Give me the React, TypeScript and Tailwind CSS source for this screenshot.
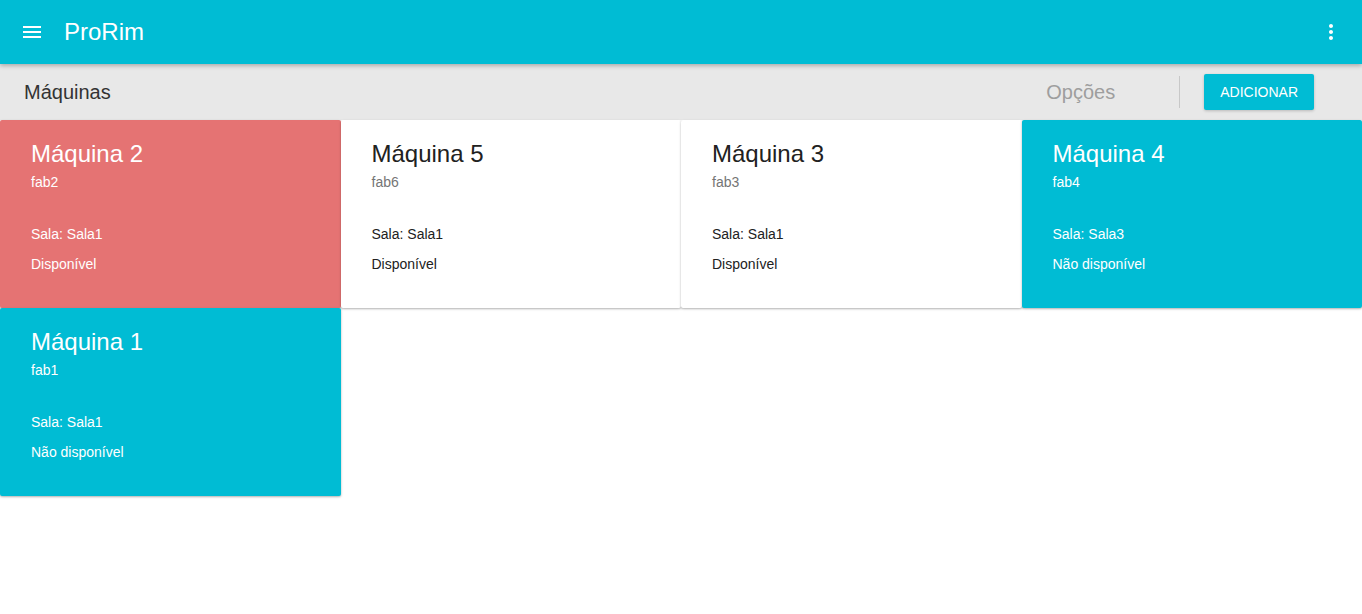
import { ReactNode } from 'react'

type Machine = {
  name: string
  code: string
  room: string
  available: boolean
  tone: 'red' | 'white' | 'cyan'
}

const MACHINES: Machine[] = [
  { name: 'Máquina 2', code: 'fab2', room: 'Sala1', available: true, tone: 'red' },
  { name: 'Máquina 5', code: 'fab6', room: 'Sala1', available: true, tone: 'white' },
  { name: 'Máquina 3', code: 'fab3', room: 'Sala1', available: true, tone: 'white' },
  { name: 'Máquina 4', code: 'fab4', room: 'Sala3', available: false, tone: 'cyan' },
  { name: 'Máquina 1', code: 'fab1', room: 'Sala1', available: false, tone: 'cyan' },
]

const TONES = {
  red: { card: 'bg-[#e57373] text-white', code: 'text-white' },
  white: { card: 'bg-white text-[#212121]', code: 'text-[#757575]' },
  cyan: { card: 'bg-[#00bcd4] text-white', code: 'text-white' },
}

function IconButton({ children }: { children: ReactNode }) {
  return <button className="w-6 h-6 flex items-center justify-center text-white">{children}</button>
}

function MachineCard({ m }: { m: Machine }) {
  const tone = TONES[m.tone]
  return (
    <div
      className={`h-[188px] pt-[18px] px-[31px] rounded-[2px] shadow-[0_1px_3px_rgba(0,0,0,0.12),0_1px_2px_rgba(0,0,0,0.2)] ${tone.card}`}
    >
      <div className="text-[24px] leading-8">{m.name}</div>
      <div className={`text-[14px] leading-5 mt-[2px] ${tone.code}`}>{m.code}</div>
      <div className="text-[14px] leading-5 mt-[32px]">Sala: {m.room}</div>
      <div className="text-[14px] leading-5 mt-[10px]">{m.available ? 'Disponível' : 'Não disponível'}</div>
    </div>
  )
}

export default function App() {
  return (
    <div className="min-h-screen bg-white font-['Liberation_Sans',Arial,sans-serif]">
      <header className="relative z-10 h-16 bg-[#00bcd4] flex items-center pl-5 pr-5 shadow-[0_2px_4px_rgba(0,0,0,0.25)]">
        <IconButton>
          <svg width="24" height="24" viewBox="0 0 24 24" fill="currentColor">
            <path d="M3 18h18v-2H3v2zm0-5h18v-2H3v2zm0-7v2h18V6H3z" />
          </svg>
        </IconButton>
        <h1 className="ml-5 text-[24px] leading-8 text-white">ProRim</h1>
        <div className="ml-auto mr-[-1px]">
          <IconButton>
            <svg width="24" height="24" viewBox="0 0 24 24" fill="currentColor">
              <path d="M12 8c1.1 0 2-.9 2-2s-.9-2-2-2-2 .9-2 2 .9 2 2 2zm0 2c-1.1 0-2 .9-2 2s.9 2 2 2 2-.9 2-2-.9-2-2-2zm0 6c-1.1 0-2 .9-2 2s.9 2 2 2 2-.9 2-2-.9-2-2-2z" />
            </svg>
          </IconButton>
        </div>
      </header>

      <div className="h-14 bg-[#e8e8e8] flex items-center pl-6 pr-12">
        <h2 className="text-[20px] leading-7 text-[#333333]">Máquinas</h2>
        <div className="ml-auto flex items-center">
          <span className="text-[20px] leading-7 text-[#9e9e9e]">Opções</span>
          <div className="ml-16 w-px h-8 bg-[#c8c8c8]" />
          <button className="ml-6 h-9 px-4 rounded-[2px] bg-[#00bcd4] text-white text-[14px] leading-9 shadow-[0_1px_3px_rgba(0,0,0,0.2)]">
            ADICIONAR
          </button>
        </div>
      </div>

      <div className="grid grid-cols-4">
        {MACHINES.map((m) => (
          <MachineCard key={m.name} m={m} />
        ))}
      </div>
    </div>
  )
}
